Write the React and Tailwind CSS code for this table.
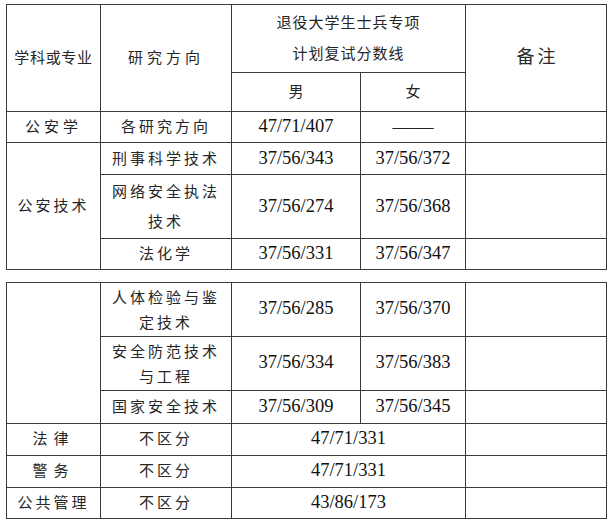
import React from 'react';

const font = "font-['Liberation_Serif','Noto_Sans_CJK_SC',serif]";
const cell = 'border border-[#3a3a3a] text-center align-middle p-0';
const zh = 'text-[15px] text-[#262626] tracking-[3px]';
const num = 'text-[18.5px] text-[#111]';

function Cols() {
  return (
    <colgroup>
      <col className="w-[94px]" />
      <col className="w-[131px]" />
      <col className="w-[129px]" />
      <col className="w-[105px]" />
      <col className="w-[141px]" />
    </colgroup>
  );
}

export default function App() {
  const topRows = [
    { dir: '刑事科学技术', m: '37/56/343', f: '37/56/372', h: 'h-[32px]' },
    { dir: ['网络安全执法', '技术'], m: '37/56/274', f: '37/56/368', h: 'h-[64px]' },
    { dir: '法化学', m: '37/56/331', f: '37/56/347', h: 'h-[31px]' },
  ];

  const midRows = [
    { dir: ['人体检验与鉴', '定技术'], m: '37/56/285', f: '37/56/370', h: 'h-[53.5px]' },
    { dir: ['安全防范技术', '与工程'], m: '37/56/334', f: '37/56/383', h: 'h-[54px]' },
    { dir: '国家安全技术', m: '37/56/309', f: '37/56/345', h: 'h-[33px]' },
  ];

  const bottomRows = [
    { name: '法律', track: 'tracking-[6px]', score: '47/71/331', h: 'h-[32px]' },
    { name: '警务', track: 'tracking-[6px]', score: '47/71/331', h: 'h-[32px]' },
    { name: '公共管理', track: 'tracking-[3px]', score: '43/86/173', h: 'h-[31px]' },
  ];

  const dirText = (dir, lh) =>
    Array.isArray(dir) ? (
      <div className={`${zh} ${lh}`}>
        {dir[0]}
        <br />
        {dir[1]}
      </div>
    ) : (
      <span className={zh}>{dir}</span>
    );

  return (
    <div className={`w-[612px] h-[525px] bg-white pl-[6px] pt-[4px] ${font}`}>
      <table className="border-collapse table-fixed w-[600px] border-[1.5px] border-[#444]">
        <Cols />
        <tbody>
          <tr className="h-[68px]">
            <td rowSpan={2} className={cell}>
              <span className="text-[15px] text-[#262626] tracking-[0.7px]">学科或专业</span>
            </td>
            <td rowSpan={2} className={cell}>
              <span className="text-[15px] text-[#262626] tracking-[4px]">研究方向</span>
            </td>
            <td colSpan={2} className={cell}>
              <div className="text-[15px] text-[#262626] tracking-[1px] leading-[31px]">
                退役大学生士兵专项
                <br />
                计划复试分数线
              </div>
            </td>
            <td rowSpan={2} className={cell}>
              <span className="text-[18px] text-[#2a2a2a] tracking-[3px] pl-[3px]">备注</span>
            </td>
          </tr>
          <tr className="h-[38.5px]">
            <td className={cell}>
              <span className="text-[15px] text-[#262626]">男</span>
            </td>
            <td className={cell}>
              <span className="text-[15px] text-[#262626]">女</span>
            </td>
          </tr>
          <tr className="h-[31.5px]">
            <td className={cell}>
              <span className={`${zh} tracking-[4px]`}>公安学</span>
            </td>
            <td className={cell}>
              <span className={`${zh} tracking-[3.5px]`}>各研究方向</span>
            </td>
            <td className={cell}>
              <span className={num}>47/71/407</span>
            </td>
            <td className={cell}>
              <span className="text-[20.5px] text-[#222] font-['Liberation_Serif',serif]">——</span>
            </td>
            <td className={cell}></td>
          </tr>
          {topRows.map((r, i) => (
            <tr key={i} className={r.h}>
              {i === 0 && (
                <td rowSpan={3} className={cell}>
                  <span className={zh}>公安技术</span>
                </td>
              )}
              <td className={cell}>{dirText(r.dir, 'leading-[30px]')}</td>
              <td className={cell}>
                <span className={num}>{r.m}</span>
              </td>
              <td className={cell}>
                <span className={num}>{r.f}</span>
              </td>
              <td className={cell}></td>
            </tr>
          ))}
        </tbody>
      </table>

      <table className="mt-[11.5px] border-collapse table-fixed w-[600px] border-[1.5px] border-[#444]">
        <Cols />
        <tbody>
          {midRows.map((r, i) => (
            <tr key={i} className={r.h}>
              {i === 0 && <td rowSpan={3} className={cell}></td>}
              <td className={cell}>{dirText(r.dir, 'leading-[25px] pt-[3px]')}</td>
              <td className={cell}>
                <span className={num}>{r.m}</span>
              </td>
              <td className={cell}>
                <span className={num}>{r.f}</span>
              </td>
              <td className={cell}></td>
            </tr>
          ))}
          {bottomRows.map((r, i) => (
            <tr key={i} className={r.h}>
              <td className={cell}>
                <span className={`text-[15px] text-[#262626] ${r.track}`}>{r.name}</span>
              </td>
              <td className={cell}>
                <span className={zh}>不区分</span>
              </td>
              <td colSpan={2} className={cell}>
                <span className={num}>{r.score}</span>
              </td>
              <td className={cell}></td>
            </tr>
          ))}
        </tbody>
      </table>
    </div>
  );
}
